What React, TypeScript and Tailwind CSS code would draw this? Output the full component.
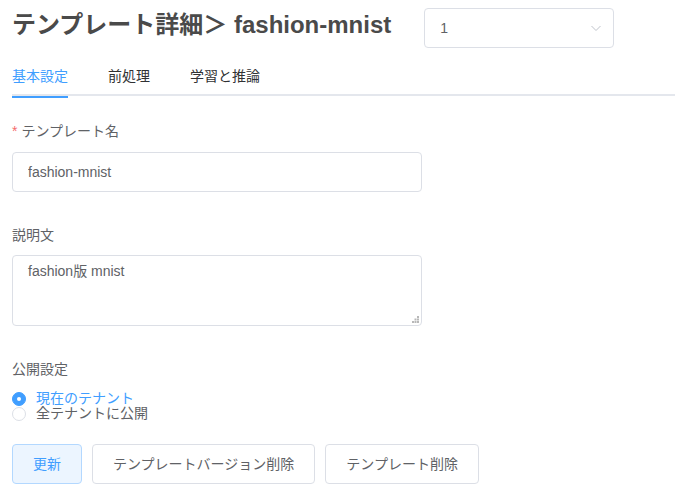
import React from "react";

const FONT = { fontFamily: '"Liberation Sans", "Noto Sans CJK JP", sans-serif' };

function Radio({ label, checked }: { label: string; checked?: boolean }): JSX.Element {
  return (
    <label className="flex h-[15px] items-center">
      <span
        className={
          checked
            ? "flex h-[14px] w-[14px] items-center justify-center rounded-full border border-[#409eff] bg-[#409eff]"
            : "flex h-[14px] w-[14px] items-center justify-center rounded-full border border-[#dcdfe6] bg-white"
        }
      >
        {checked && <span className="h-[4px] w-[4px] rounded-full bg-white" />}
      </span>
      <span className={checked ? "ml-[10px] text-[14px] leading-[15px] text-[#409eff]" : "ml-[10px] text-[14px] leading-[15px] text-[#606266]"}>
        {label}
      </span>
    </label>
  );
}

function Button({ children, primary }: { children: React.ReactNode; primary?: boolean }): JSX.Element {
  return (
    <button
      type="button"
      className={
        primary
          ? "h-[40px] rounded-[4px] border border-[#b3d8ff] bg-[#ecf5ff] px-[20px] text-[14px] text-[#409eff]"
          : "h-[40px] rounded-[4px] border border-[#dcdfe6] bg-white px-[20px] text-[14px] text-[#606266]"
      }
    >
      {children}
    </button>
  );
}

function ResizeDots(): JSX.Element {
  return (
    <svg className="absolute bottom-[3px] right-[3px]" width="7" height="7" viewBox="0 0 7 7" fill="#b8b8b8">
      <rect x="5" y="0" width="2" height="2" />
      <rect x="2.5" y="2.5" width="2" height="2" />
      <rect x="5" y="2.5" width="2" height="2" />
      <rect x="0" y="5" width="2" height="2" />
      <rect x="2.5" y="5" width="2" height="2" />
      <rect x="5" y="5" width="2" height="2" />
    </svg>
  );
}

export default function App(): JSX.Element {
  return (
    <div className="min-h-[499px] w-[675px] bg-white pl-[12px]" style={FONT}>
      {/* header */}
      <div className="flex items-start pt-[8px]">
        <h1 className="mt-[1px] text-[24px] font-bold leading-[32px] text-[#4a4a4a]">
          テンプレート詳細＞ fashion-mnist
        </h1>
        <div className="ml-[33px] flex h-[40px] w-[190px] items-center justify-between rounded-[4px] border border-[#dcdfe6] pl-[15px] pr-[10px]">
          <span className="text-[14px] text-[#606266]">1</span>
          <svg width="14" height="14" viewBox="0 0 14 14" fill="none">
            <path d="M2.5 5 L7 9.5 L11.5 5" stroke="#c0c4cc" strokeWidth="1" />
          </svg>
        </div>
      </div>

      {/* tabs */}
      <div className="relative mt-[8px] flex h-[40px] border-b-2 border-[#e4e7ed]">
        <div className="relative h-[40px] pr-[20px] text-[14px] leading-[40px] text-[#409eff]">
          基本設定
          <span className="absolute bottom-[-2px] left-0 h-[2px] w-[56px] bg-[#409eff]" />
        </div>
        <div className="h-[40px] px-[20px] text-[14px] leading-[40px] text-[#303133]">前処理</div>
        <div className="h-[40px] px-[20px] text-[14px] leading-[40px] text-[#303133]">学習と推論</div>
      </div>

      {/* form */}
      <div className="w-[410px]">
        <div className="mt-[24px] mb-[10px] flex h-[22px] items-center text-[14px] text-[#606266]">
          <span className="mr-[4px] text-[#f56c6c]">*</span>
          テンプレート名
        </div>
        <input
          readOnly
          value="fashion-mnist"
          className="block h-[40px] w-full rounded-[4px] border border-[#dcdfe6] px-[15px] text-[14px] text-[#606266] outline-none"
        />

        <div className="mt-[32px] mb-[9px] flex h-[22px] items-center text-[14px] text-[#606266]">説明文</div>
        <div className="relative">
          <textarea
            readOnly
            defaultValue="fashion版 mnist"
            className="block h-[71px] w-full resize-none rounded-[4px] border border-[#dcdfe6] px-[15px] py-[5px] text-[14px] leading-[1.5] text-[#606266] outline-none"
          />
          <ResizeDots />
        </div>

        <div className="mt-[32px] flex h-[22px] items-center text-[14px] text-[#606266]">公開設定</div>
        <div className="mt-[11px] flex flex-col">
          <Radio label="現在のテナント" checked />
          <Radio label="全テナントに公開" />
        </div>
      </div>

      <div className="mt-[23px] flex gap-[10px]">
        <Button primary>更新</Button>
        <Button>テンプレートバージョン削除</Button>
        <Button>テンプレート削除</Button>
      </div>
    </div>
  );
}
